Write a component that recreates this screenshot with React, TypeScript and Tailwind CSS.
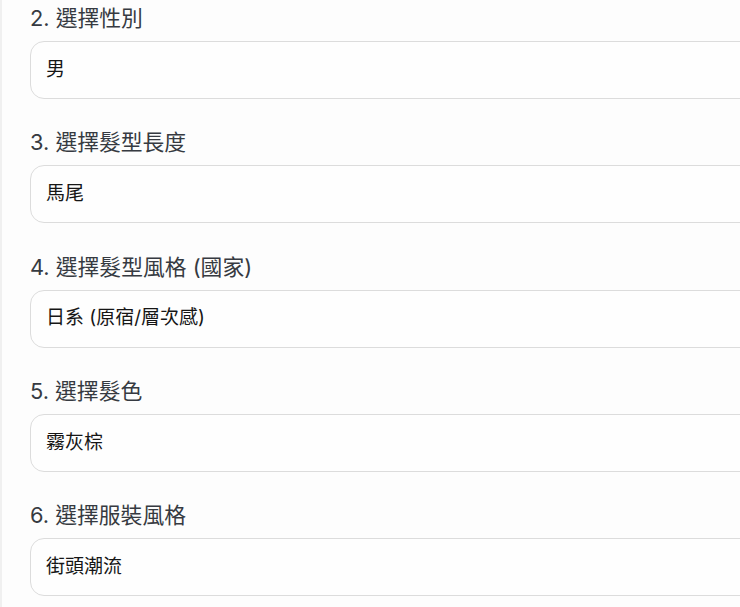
import React from "react";

const items = [
  { label: "2. 選擇性別", value: "男" },
  { label: "3. 選擇髮型長度", value: "馬尾" },
  { label: "4. 選擇髮型風格 (國家)", value: "日系 (原宿/層次感)" },
  { label: "5. 選擇髮色", value: "霧灰棕" },
  { label: "6. 選擇服裝風格", value: "街頭潮流" },
];

export default function App() {
  return (
    <div
      className="w-[740px] h-[607px] overflow-hidden bg-[#fdfdfd] border-l-[2px] border-[#f0f0f0]"
      style={{ fontFamily: '"Inter", "Noto Sans CJK TC", sans-serif' }}
    >
      <div className="pl-[28px] pt-[3px] flex flex-col gap-[28.25px]">
        {items.map((it) => (
          <div key={it.label} className="flex flex-col">
            <div className="h-[30px] leading-[30px] text-[21.8px] font-normal text-[#363a41] mb-[8px] whitespace-nowrap">
              {it.label}
            </div>
            <div className="w-[760px] h-[58px] shrink-0 rounded-[14px] border border-[#dcdcdc] bg-[#fefefe] flex items-center pl-[15px] text-[19px] text-[#161616] whitespace-nowrap">
              {it.value}
            </div>
          </div>
        ))}
      </div>
    </div>
  );
}
